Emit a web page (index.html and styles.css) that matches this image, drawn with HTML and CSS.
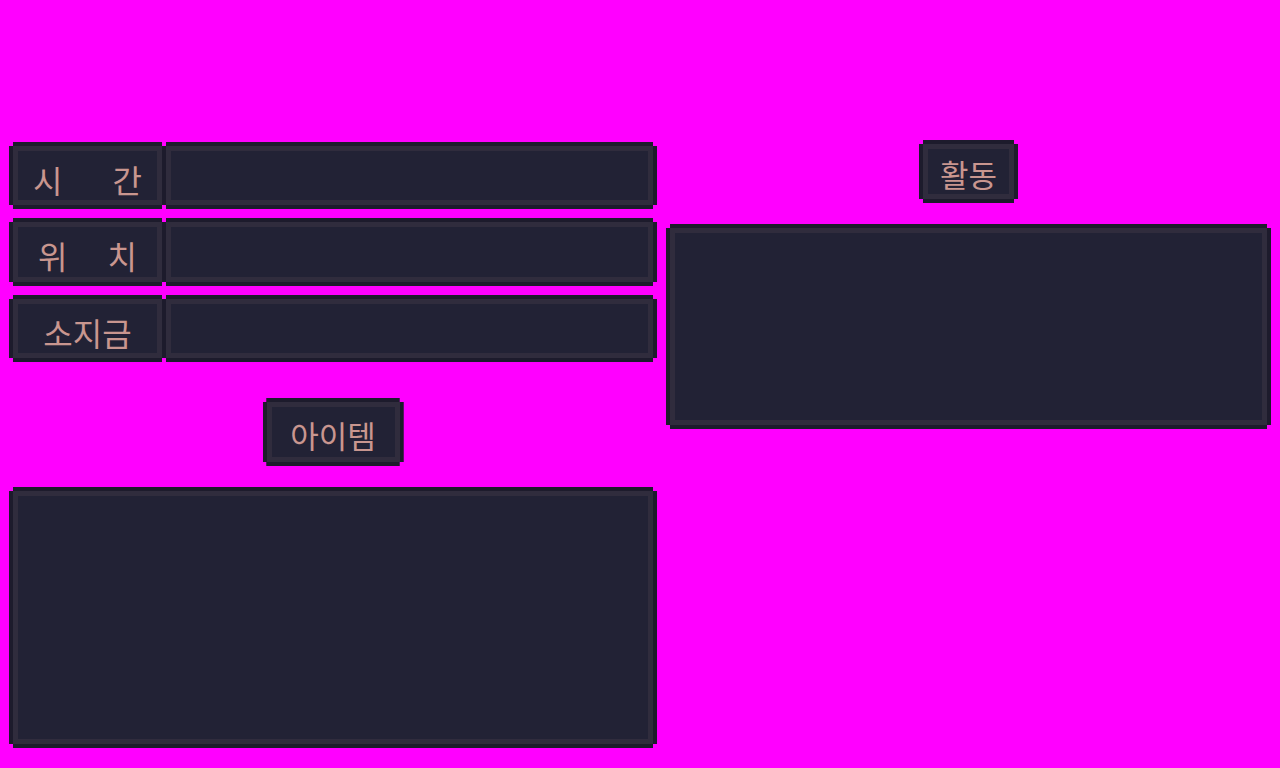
FILE: index.html
```html
<!DOCTYPE html>
<html lang="ko">
<head>
<meta charset="utf-8">
<title>상태</title>
<link rel="stylesheet" href="styles.css">
</head>
<body>
<div class="screen">
  <div class="col-left">
    <div class="stat-row">
      <div class="box label gap-wide"><span>시</span><span>간</span></div>
      <div class="box value"></div>
    </div>
    <div class="stat-row tall">
      <div class="box label gap-mid"><span>위</span><span>치</span></div>
      <div class="box value"></div>
    </div>
    <div class="stat-row">
      <div class="box label"><span>소지금</span></div>
      <div class="box value"></div>
    </div>
    <div class="box header header-item"><span>아이템</span></div>
    <div class="box panel panel-item"></div>
  </div>
  <div class="col-right">
    <div class="box header header-activity"><span>활동</span></div>
    <div class="box panel panel-activity"></div>
  </div>
</div>
</body>
</html>
```
FILE: styles.css
```css
html, body {
  margin: 0;
  padding: 0;
}
body {
  background: #ff00ff;
  width: 1280px;
  height: 768px;
  overflow: hidden;
  font-family: "Noto Sans CJK KR", "Noto Sans", sans-serif;
  color: #c9968f;
}
.screen {
  display: flex;
  gap: 9px;
  padding: 140px 9px 0 9px;
  align-items: flex-start;
}
.col-left {
  width: 648px;
  padding-top: 2px;
  display: flex;
  flex-direction: column;
}
.col-right {
  width: 605px;
  display: flex;
  flex-direction: column;
}
.box {
  box-sizing: border-box;
  background: #222235;
  border: 4px solid #1d1b2c;
  box-shadow: inset 0 0 0 5px #302c3d;
  clip-path: polygon(
    4px 0, calc(100% - 4px) 0, calc(100% - 4px) 4px, 100% 4px,
    100% calc(100% - 4px), calc(100% - 4px) calc(100% - 4px),
    calc(100% - 4px) 100%, 4px 100%, 4px calc(100% - 4px),
    0 calc(100% - 4px), 0 4px, 4px 4px
  );
}
.stat-row {
  display: flex;
  height: 67px;
  margin-bottom: 9px;
}
.stat-row.tall {
  height: 68px;
}
.label {
  width: 157px;
  height: 100%;
  display: flex;
  align-items: center;
  justify-content: center;
  font-size: 32px;
  line-height: 1;
  padding-top: 6px;
}
.label.gap-wide {
  gap: 50px;
}
.label.gap-mid {
  gap: 40px;
}
.value {
  flex: 1;
  height: 100%;
  margin-left: -4px;
}
.header {
  display: flex;
  align-items: center;
  justify-content: center;
  align-self: center;
  font-size: 31px;
  line-height: 1;
}
.header-item {
  width: 141px;
  height: 68px;
  margin-top: 27px;
  padding-top: 4px;
}
.header-activity {
  width: 99px;
  height: 63px;
  padding-top: 3px;
}
.panel {
  width: 100%;
}
.panel-item {
  height: 261px;
  margin-top: 21px;
}
.panel-activity {
  height: 205px;
  margin-top: 21px;
}
```
